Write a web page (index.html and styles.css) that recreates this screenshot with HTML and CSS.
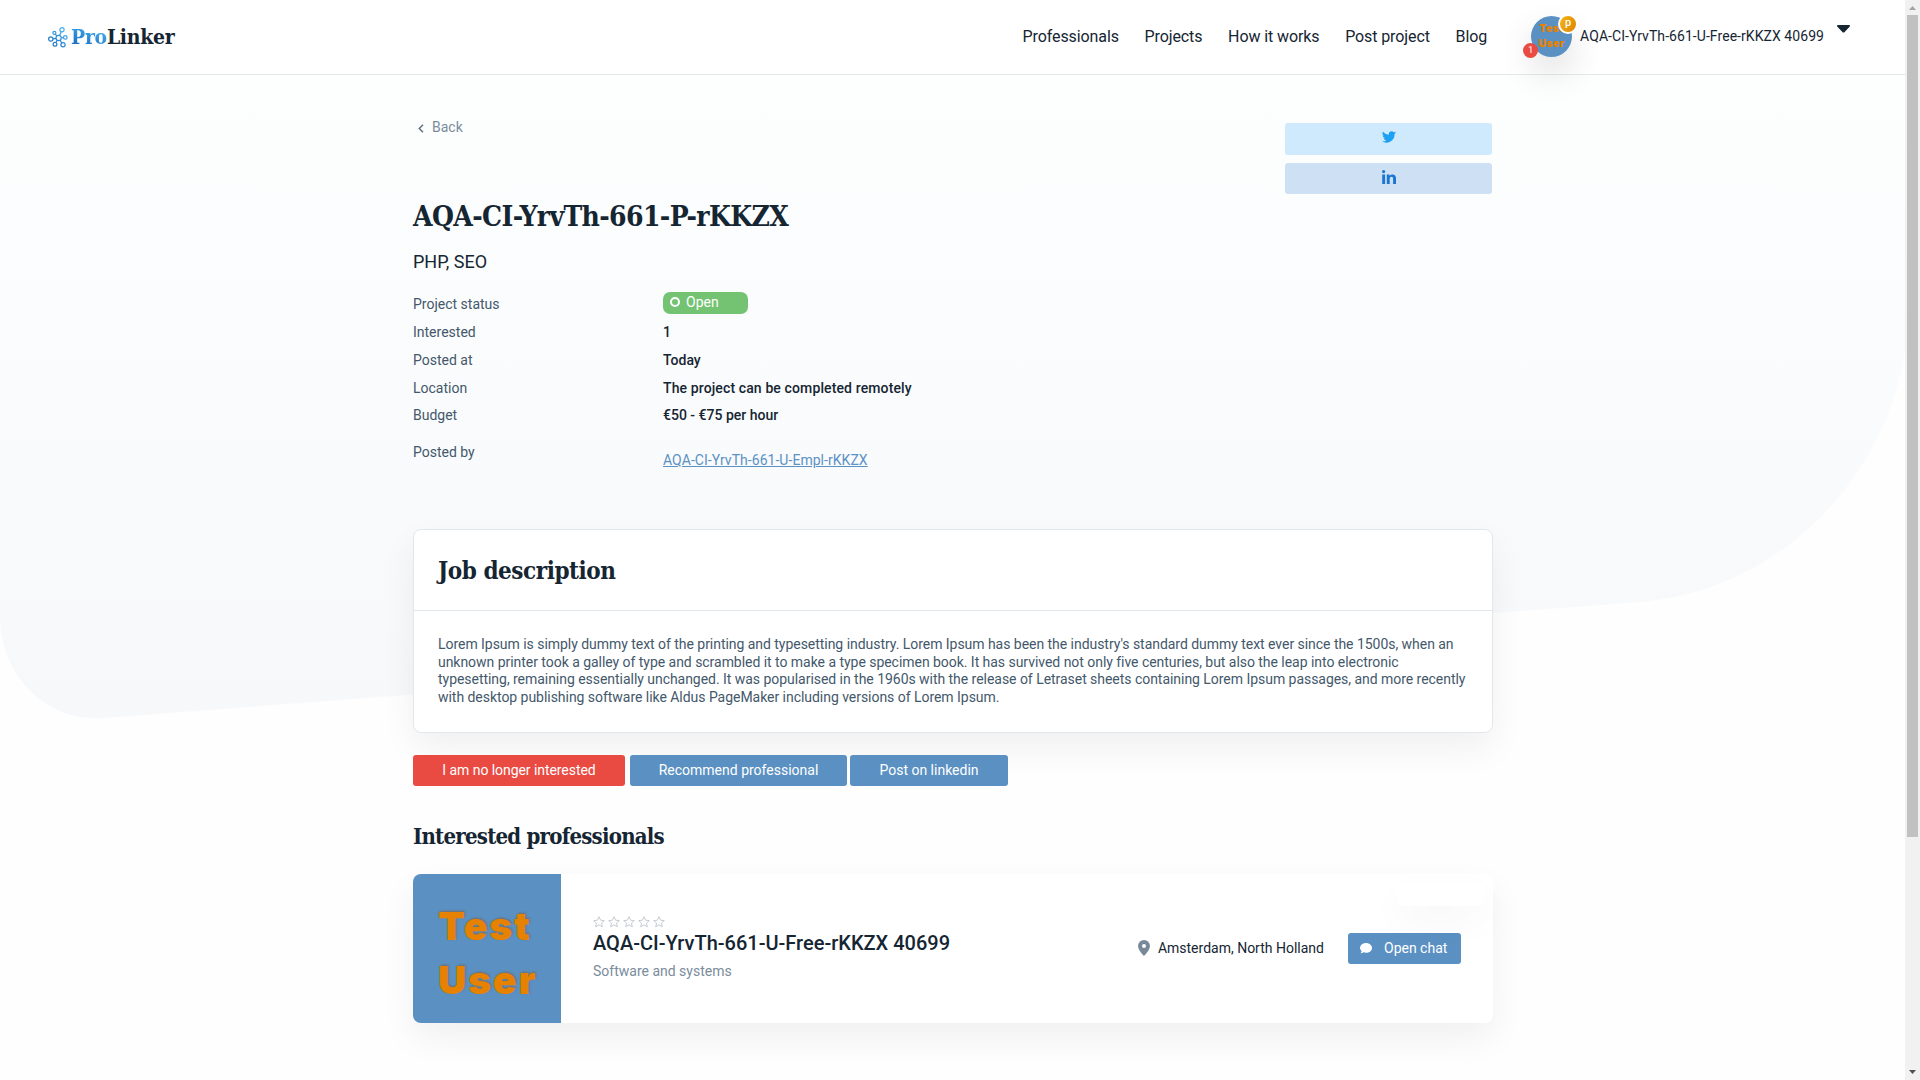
FILE: index.html
```html
<!DOCTYPE html>
<html lang="en">
<head>
<meta charset="utf-8">
<title>ProLinker</title>
<link rel="stylesheet" href="styles.css">
</head>
<body>
<div class="window">
  <div class="page">
    <svg class="backdrop" viewBox="0 0 1905 730" aria-hidden="true">
      <defs><linearGradient id="wash" x1="0" y1="0" x2="0" y2="1"><stop offset="0" stop-color="#fdfefe"/><stop offset="1" stop-color="#f7f8fa"/></linearGradient></defs>
      <path fill="url(#wash)" d="M0 74V615C0 674 44 722 103 718L1640 602C1780 590 1885 480 1905 350V74Z"/>
    </svg>
    <header class="header">
      <a class="logo">
        <svg width="20" height="21" viewBox="0 0 20 21" fill="none" stroke="url(#blue)" stroke-width="1.2">
          <defs><linearGradient id="blue" gradientUnits="userSpaceOnUse" x1="0" y1="20" x2="16" y2="0"><stop stop-color="#1566b8"/><stop offset="1" stop-color="#4bb5f2"/></linearGradient></defs>
          <circle cx="10.6" cy="11" r="2.6"/><circle cx="14" cy="2.8" r="2.1"/><circle cx="6.4" cy="5.9" r="1.5"/><circle cx="2.8" cy="12" r="2.2"/><circle cx="17.3" cy="10.4" r="1.8"/><circle cx="7" cy="17.2" r="1.9"/><circle cx="15" cy="17.8" r="2.1"/>
          <path d="M11.6 8.6 13.2 4.8M8.8 9 7.4 7.2M8 11.3 5 11.8M13.2 10.9l2.3-.3M9.3 13.3 7.9 15.5M12 13.2l1.8 2.7"/>
        </svg>
        <span class="logo-text"><span class="logo-pro">Pro</span>Linker</span>
      </a>
      <nav class="nav">
        <a>Professionals</a><a>Projects</a><a>How it works</a><a>Post project</a><a>Blog</a>
      </nav>
      <div class="user">
        <div class="avatar">
          <div class="avatar-pic"><span>Test</span><span>User</span></div>
          <span class="badge-pro">p</span><span class="badge-count">1</span>
        </div>
        <span class="user-name">AQA-CI-YrvTh-661-U-Free-rKKZX 40699</span>
        <svg class="caret" width="13" height="8" viewBox="0 0 13 8"><path fill="#152532" d="M1 0h11c1 0 1.300 1 .6 1.700L7.600 7c-.6.700-1.600.700-2.200 0L.4 1.700C-.3 1 0 0 1 0Z"/></svg>
      </div>
    </header>
    <main class="main">
      <section class="project">
        <div class="project-info">
          <a class="back"><svg width="6" height="9" viewBox="0 0 6 9" fill="none" stroke="#5f7182" stroke-width="1.500"><path d="M5 .8 1.300 4.500 5 8.200"/></svg>Back</a>
          <h1>AQA-CI-YrvTh-661-P-rKKZX</h1>
          <p class="skills">PHP, SEO</p>
          <dl class="facts">
            <dt>Project status</dt><dd><span class="status"><i class="ring"></i>Open</span></dd>
            <dt>Interested</dt><dd>1</dd>
            <dt>Posted at</dt><dd>Today</dd>
            <dt>Location</dt><dd class="remote">The project can be completed remotely</dd>
            <dt>Budget</dt><dd>€50 - €75 per hour</dd>
            <dt class="by">Posted by</dt><dd class="by-link"><a>AQA-CI-YrvTh-661-U-Empl-rKKZX</a></dd>
          </dl>
        </div>
        <div class="share">
          <a class="share-btn twitter"><svg width="14" height="12" viewBox="0 0 24 20"><path fill="#1da1f2" d="M24 2.400a10 10 0 0 1-2.800.8A5 5 0 0 0 23.300.500a10 10 0 0 1-3.100 1.200 4.900 4.900 0 0 0-8.400 4.500A14 14 0 0 1 1.700 1a4.900 4.900 0 0 0 1.500 6.600 4.900 4.900 0 0 1-2.200-.6 4.900 4.900 0 0 0 3.900 4.900 5 5 0 0 1-2.200.1 4.900 4.900 0 0 0 4.600 3.400A9.900 9.900 0 0 1 0 17.400a14 14 0 0 0 21.500-12.400A10 10 0 0 0 24 2.400Z"/></svg></a>
          <a class="share-btn linkedin"><svg width="14" height="14" viewBox="0 0 14 14" fill="#1976d2"><circle cx="1.600" cy="1.600" r="1.600"/><path d="M.2 4.600h2.900V14H.2zM4.800 4.600h2.800v1.300c.5-.9 1.500-1.500 2.900-1.500C13.200 4.400 14 6 14 8.600V14h-2.900V9.200c0-1.300-.2-2.400-1.600-2.400S7.700 7.900 7.700 9.100V14H4.800z"/></svg></a>
        </div>
      </section>
      <section class="card">
        <h2>Job description</h2>
        <p>Lorem Ipsum is simply dummy text of the printing and typesetting industry. Lorem Ipsum has been the industry's standard dummy text ever since the 1500s, when an<br>unknown printer took a galley of type and scrambled it to make a type specimen book. It has survived not only five centuries, but also the leap into electronic<br>typesetting, remaining essentially unchanged. It was popularised in the 1960s with the release of Letraset sheets containing Lorem Ipsum passages, and more recently<br>with desktop publishing software like Aldus PageMaker including versions of Lorem Ipsum.</p>
      </section>
      <div class="actions">
        <button class="btn danger">I am no longer interested</button><button class="btn recommend">Recommend professional</button><button class="btn post">Post on linkedin</button>
      </div>
      <h2 class="list-title">Interested professionals</h2>
      <article class="pro">
        <div class="pro-pic"><span>Test</span><span>User</span></div>
        <div class="pro-info">
          <svg class="stars" width="74" height="12" viewBox="0 0 74 12" fill="none" stroke="#c6ccd5" stroke-width="1">
            <defs><path id="star" d="M6 .7 7.600 4.200l3.700.4L8.500 7.100l.8 3.700L6 8.900l-3.300 1.900.8-3.700L.7 4.600l3.700-.4Z"/></defs>
            <use href="#star"/><use href="#star" x="15"/><use href="#star" x="30"/><use href="#star" x="45"/><use href="#star" x="60"/>
          </svg>
          <h3>AQA-CI-YrvTh-661-U-Free-rKKZX 40699</h3>
          <p>Software and systems</p>
        </div>
        <span class="place"><svg width="12" height="16" viewBox="0 0 12 16"><path fill="#778899" fill-rule="evenodd" d="M6 0a6 6 0 0 1 6 6c0 4-6 10-6 10S0 10 0 6a6 6 0 0 1 6-6Zm0 4a2 2 0 1 0 0 4 2 2 0 0 0 0-4Z"/></svg>Amsterdam, North Holland</span>
        <button class="btn chat"><svg width="12" height="11" viewBox="0 0 12 11"><path fill="#fff" d="M6 0c3.300 0 6 2.200 6 4.900s-2.700 4.900-6 4.900c-.9 0-1.800-.2-2.500-.5-.8.6-1.800 1-3 1 .6-.6 1-1.400 1.100-2.300A4.600 4.600 0 0 1 0 4.900C0 2.200 2.700 0 6 0Z"/></svg>Open chat</button>
        <span class="pill"></span>
      </article>
    </main>
  </div>
  <div class="scrollbar">
    <svg width="15" height="15" viewBox="0 0 15 15"><path fill="#a3a3a3" d="M4 10h7L7.500 6Z"/></svg>
    <div class="thumb"></div>
    <svg class="down" width="15" height="15" viewBox="0 0 15 15"><path fill="#505050" d="M4 5h7L7.500 9Z"/></svg>
  </div>
</div>
</body>
</html>
```
FILE: styles.css
```css
* { box-sizing: border-box; }
body { margin: 0; font: 14px/18px Roboto, sans-serif; color: #152532; background: #fefefe; }
h1, h2, h3, p, dl, dd { margin: 0; }
.window { display: grid; grid-template-columns: 1fr 15px; height: 1080px; overflow: hidden; }
.page { position: relative; }
.backdrop { position: absolute; top: 0; left: 0; width: 1905px; height: 730px; }
.header { position: relative; display: flex; align-items: center; height: 75px; padding: 0 55px 0 48px; background: #fff; border-bottom: 1px solid #e3e8eb; }
.logo { display: flex; align-items: center; gap: 3px; height: 74px; }
.logo-text { font: bold 21px/26px "Roboto Slab", "DejaVu Serif", serif; font-stretch: condensed; letter-spacing: -0.3px; }
.logo-pro { color: transparent; background: linear-gradient(20deg, #1769c0 10%, #4bb8f5 90%); background-clip: text; -webkit-background-clip: text; }
.nav { display: flex; gap: 25.700px; margin-left: auto; font-size: 16px; letter-spacing: -0.100px; }
.user { display: flex; align-items: center; margin-left: 44px; padding-bottom: 2px; }
.avatar { position: relative; width: 41px; height: 41px; border-radius: 50%; box-shadow: 0 15px 35px rgba(0, 0, 0, .14); }
.avatar-pic { display: flex; flex-direction: column; align-items: center; justify-content: center; width: 41px; height: 41px; overflow: hidden; border-radius: 50%; background: #5a90c2; color: #e68200; font: 900 10.500px/15px Inter, sans-serif; letter-spacing: .4px; }
.badge-pro, .badge-count { position: absolute; display: flex; justify-content: center; color: #fff; border-radius: 50%; }
.badge-pro { left: 27px; top: -2px; width: 20px; height: 20px; border: 2px solid #fff; background: linear-gradient(120deg, #f5b70e, #dd8205); font: 500 11px/14px Roboto, sans-serif; }
.badge-count { left: -8px; top: 27px; width: 15px; height: 15px; background: #e94b42; font: 9.500px/14px Roboto, sans-serif; }
.user-name { margin-left: 8px; letter-spacing: .06px; }
.caret { margin: -15px 0 0 13px; }
.main { position: relative; width: 1080px; margin-left: 413px; }
.project { display: flex; justify-content: space-between; height: 454px; }
.back { display: flex; align-items: center; gap: 8px; height: 18px; margin-top: 43px; padding-left: 5px; color: #7b8c9c; }
.back svg { margin-top: 2px; }
h1, h2 { font-family: "Roboto Slab", "DejaVu Serif", serif; font-weight: bold; font-stretch: condensed; white-space: nowrap; }
h1 { margin-top: 63px; font-size: 28px; line-height: 36px; letter-spacing: -0.620px; }
.skills { margin-top: 15px; font-size: 18px; line-height: 24px; }
.facts { display: grid; grid-template-columns: 250px 1fr; grid-template-rows: 28px 28px 28px 28px 26px 46px; align-items: center; margin-top: 16px; }
.facts dt { color: #43586b; }
.facts dd { font-weight: 500; }
.facts .remote { letter-spacing: .12px; }
.status { display: flex; align-items: center; gap: 6px; width: 85px; height: 22px; margin-top: -3px; padding: 0 7px 1px; border-radius: 7px; background: #73c373; color: #fff; font-weight: 400; }
.ring { width: 10px; height: 10px; border: 2px solid #fff; border-radius: 50%; }
.facts .by { margin-top: 2px; }
.facts .by-link { margin-top: 18px; color: #5a92c4; font-weight: 400; letter-spacing: .04px; text-decoration: underline; }
.share { display: flex; flex-direction: column; gap: 8px; width: 207px; margin: 48px 1px 0 0; }
.share-btn { display: flex; justify-content: center; align-items: center; height: 32px; padding-bottom: 4px; border-radius: 3px; }
.twitter { background: #cfeafc; }
.linkedin { height: 31px; padding-bottom: 3px; background: #cee0f4; }
.card { height: 204px; border: 1px solid #e1e7eb; border-radius: 8px; background: #fff; box-shadow: 0 15px 35px rgba(0, 0, 0, .06); }
.card h2 { height: 81px; padding-left: 24px; border-bottom: 1px solid #e1e7eb; font-size: 24px; line-height: 81px; letter-spacing: -0.450px; }
.card p { padding: 25px 0 0 24px; color: #43586b; line-height: 17.700px; letter-spacing: -0.038px; white-space: nowrap; }
.actions { display: flex; margin-top: 22px; }
.btn { height: 31px; padding: 0 0 1px; border: 0; border-radius: 3px; background: #5a90c2; color: #fff; font: 14px/18px Roboto, sans-serif; }
.danger { width: 212px; margin-right: 5px; background: #e94b42; letter-spacing: -0.060px; }
.recommend { width: 217px; margin-right: 3px; }
.post { width: 158px; }
.list-title { margin-top: 34px; font-size: 22px; line-height: 32px; letter-spacing: -0.770px; }
.pro { position: relative; display: flex; align-items: center; height: 149px; margin-top: 22px; padding-right: 32px; border-radius: 8px; background: #fff; box-shadow: 0 15px 35px rgba(0, 0, 0, .06); }
.pro-pic { display: flex; flex-direction: column; justify-content: center; width: 148px; height: 149px; padding: 8px 0 0 25px; border-radius: 8px 0 0 8px; background: #5a90c2; color: #e68200; font: 900 39px/54px Inter, sans-serif; letter-spacing: 1.900px; text-shadow: 1px -1px 2px rgba(120, 100, 80, .8); }
.pro-info { margin: -2px auto 0 32px; }
.stars { display: block; }
h3 { margin-top: 3px; font-size: 20px; line-height: 24px; font-weight: 500; }
.pro-info p { margin-top: 7px; color: #7b8c9c; }
.place { display: flex; align-items: center; gap: 8px; margin: -2px 24px 0 0; }
.chat { display: flex; align-items: center; gap: 12px; width: 113px; padding-left: 12px; }
.pill { position: absolute; right: 8px; top: 8px; width: 88px; height: 24px; border-radius: 6px; background: #fff; box-shadow: 0 15px 35px rgba(0, 0, 0, .04); }
.scrollbar { position: relative; display: flex; flex-direction: column; align-items: center; background: #f1f1f1; }
.thumb { width: 11px; height: 822px; background: #c1c1c1; }
.down { margin-top: auto; }
```
